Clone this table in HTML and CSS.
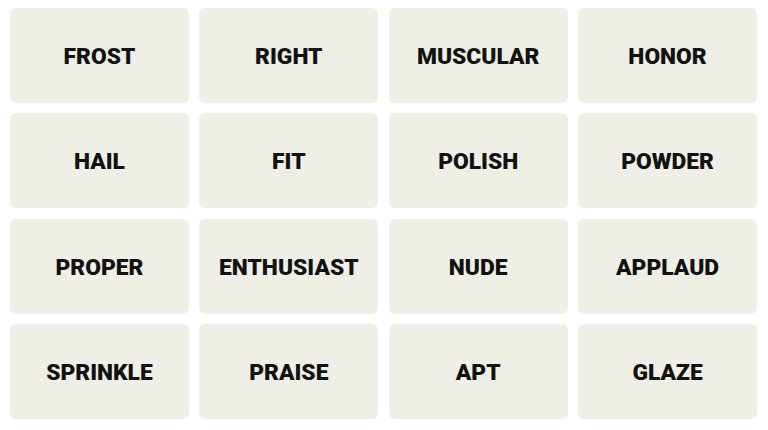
FILE: index.html
```html
<!DOCTYPE html>
<html>
<head>
<meta charset="utf-8">
<link rel="stylesheet" href="styles.css">
</head>
<body>
<div class="grid">
  <div class="tile">FROST</div>
  <div class="tile">RIGHT</div>
  <div class="tile">MUSCULAR</div>
  <div class="tile">HONOR</div>
  <div class="tile">HAIL</div>
  <div class="tile">FIT</div>
  <div class="tile">POLISH</div>
  <div class="tile">POWDER</div>
  <div class="tile">PROPER</div>
  <div class="tile">ENTHUSIAST</div>
  <div class="tile">NUDE</div>
  <div class="tile">APPLAUD</div>
  <div class="tile">SPRINKLE</div>
  <div class="tile">PRAISE</div>
  <div class="tile">APT</div>
  <div class="tile">GLAZE</div>
</div>
</body>
</html>
```
FILE: styles.css
```css
html, body {
  margin: 0;
  padding: 0;
  background: #ffffff;
}
.grid {
  box-sizing: border-box;
  width: 768px;
  height: 430px;
  padding: 8px 11px 11px 10px;
  display: grid;
  grid-template-columns: repeat(4, 1fr);
  grid-template-rows: repeat(4, 1fr);
  gap: 10.5px;
}
.tile {
  background: #efefe6;
  border-radius: 6px;
  display: flex;
  align-items: center;
  justify-content: center;
  padding-top: 2px;
  font-family: Roboto, "Liberation Sans", Arial, sans-serif;
  font-weight: 900;
  font-size: 22.8px;
  color: #121212;
}
```
